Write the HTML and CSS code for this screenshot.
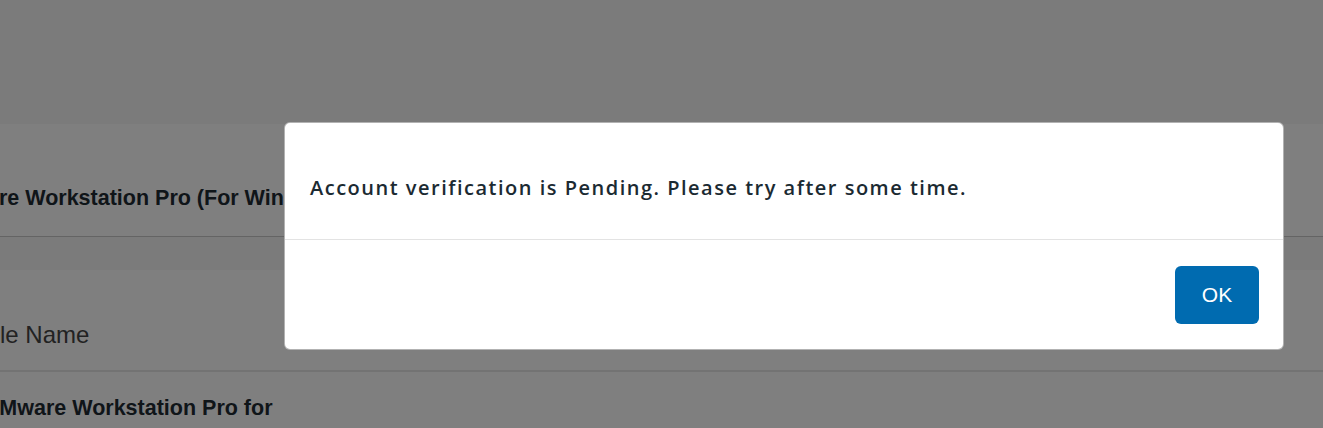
FILE: index.html
```html
<!DOCTYPE html>
<html>
<head>
<meta charset="utf-8">
<link rel="stylesheet" href="styles.css">
</head>
<body>
<div class="page">
  <div class="top-space"></div>
  <div class="product-row">
    <div class="product-title">VMware Workstation Pro (For Windows)</div>
  </div>
  <div class="gap-band"></div>
  <div class="table">
    <div class="table-head">
      <div class="th">File Name</div>
    </div>
    <div class="table-row">
      <div class="td">VMware Workstation Pro for Windows</div>
    </div>
  </div>
</div>
<div class="overlay"></div>
<div class="modal-wrap">
  <div class="modal">
    <div class="modal-body">
      <p class="message">Account verification is Pending. Please try after some time.</p>
    </div>
    <div class="modal-footer">
      <button class="btn-ok">OK</button>
    </div>
  </div>
</div>
</body>
</html>
```
FILE: styles.css
```css
* { box-sizing: border-box; }
html, body { margin: 0; padding: 0; }
body {
  width: 1323px;
  height: 428px;
  overflow: hidden;
  background: #ffffff;
  font-family: "Liberation Sans", Arial, sans-serif;
  position: relative;
}
.page { width: 1323px; }
.top-space { height: 124px; background: #f6f6f6; }
.product-row {
  height: 113px;
  background: #ffffff;
  border-bottom: 1px solid #c8c8c8;
  display: flex;
  align-items: flex-end;
  overflow: hidden;
  padding-bottom: 26px;
}
.product-title {
  font-weight: bold;
  font-size: 21.5px;
  line-height: 24px;
  color: #1e2a33;
  white-space: nowrap;
  margin-left: -62px;
}
.gap-band { height: 33px; background: #f6f6f6; }
.table { overflow: hidden; }
.table-head {
  height: 102px;
  border-bottom: 2px solid #e6e6e6;
  display: flex;
  align-items: flex-end;
  padding-bottom: 21px;
}
.th {
  font-size: 24px;
  color: #444;
  white-space: nowrap;
  margin-left: -20px;
}
.table-row {
  height: 60px;
  padding-top: 21px;
}
.td {
  font-weight: bold;
  font-size: 21.5px;
  line-height: 30px;
  color: #1e2a33;
  width: 300px;
  margin-left: -15px;
}
.overlay {
  position: absolute;
  inset: 0;
  background: rgba(0, 0, 0, 0.5);
}
.modal-wrap {
  position: absolute;
  inset: 0;
  display: flex;
  justify-content: flex-start;
  align-items: flex-start;
  padding-top: 122px;
  padding-left: 284px;
}
.modal {
  width: 1000px;
  height: 228px;
  background: #ffffff;
  border: 1px solid rgba(0, 0, 0, 0.3);
  border-radius: 6px;
  display: flex;
  flex-direction: column;
}
.modal-body {
  height: 117px;
  border-bottom: 1px solid #e3e3e3;
  padding: 0 25px;
  display: flex;
  align-items: center;
}
.message {
  margin: 0;
  padding-top: 13px;
  font-family: "Open Sans", sans-serif;
  font-weight: 600;
  font-size: 20px;
  letter-spacing: 1.5px;
  color: #1b2a32;
}
.modal-footer {
  flex: 1;
  display: flex;
  justify-content: flex-end;
  align-items: center;
  padding-right: 24px;
}
.btn-ok {
  width: 84px;
  height: 58px;
  background: #006bb0;
  color: #ffffff;
  border: none;
  border-radius: 6px;
  font-family: "Liberation Sans", Arial, sans-serif;
  font-size: 21px;
}
```
